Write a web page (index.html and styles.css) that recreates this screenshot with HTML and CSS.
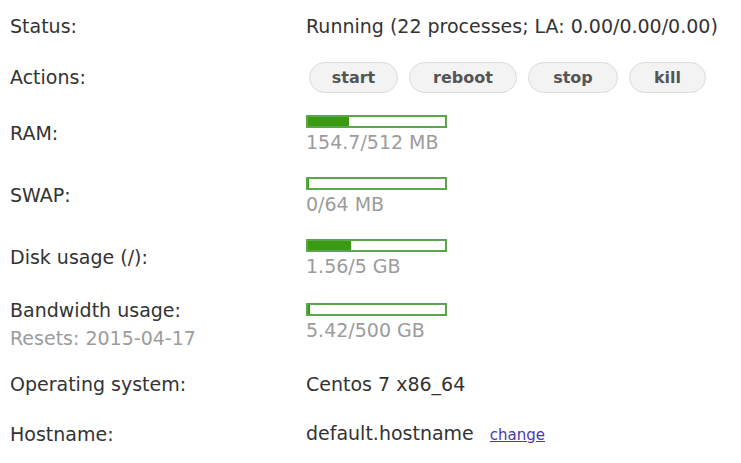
FILE: index.html
```html
<!DOCTYPE html>
<html>
<head>
<meta charset="utf-8">
<link rel="stylesheet" href="styles.css">
</head>
<body>
<div class="info">
  <div class="row r-status">
    <div class="label">Status:</div>
    <div class="value">Running (22 processes; LA: 0.00/0.00/0.00)</div>
  </div>
  <div class="row r-actions">
    <div class="label">Actions:</div>
    <div class="value actions">
      <button class="btn b-start">start</button>
      <button class="btn b-reboot">reboot</button>
      <button class="btn b-stop">stop</button>
      <button class="btn b-kill">kill</button>
    </div>
  </div>
  <div class="row r-meter">
    <div class="label">RAM:</div>
    <div class="value meter">
      <div class="bar"><div class="fill" style="width:30.2%"></div></div>
      <div class="sub">154.7/512 MB</div>
    </div>
  </div>
  <div class="row r-meter">
    <div class="label">SWAP:</div>
    <div class="value meter">
      <div class="bar"><div class="fill" style="width:1%"></div></div>
      <div class="sub">0/64 MB</div>
    </div>
  </div>
  <div class="row r-meter">
    <div class="label">Disk usage (/):</div>
    <div class="value meter">
      <div class="bar"><div class="fill" style="width:31.2%"></div></div>
      <div class="sub">1.56/5 GB</div>
    </div>
  </div>
  <div class="row r-bw">
    <div class="label">Bandwidth usage:<div class="sub">Resets: 2015-04-17</div></div>
    <div class="value meter">
      <div class="bar"><div class="fill" style="width:1.1%"></div></div>
      <div class="sub">5.42/500 GB</div>
    </div>
  </div>
  <div class="row r-os">
    <div class="label">Operating system:</div>
    <div class="value">Centos 7 x86_64</div>
  </div>
  <div class="row r-host">
    <div class="label">Hostname:</div>
    <div class="value">default.hostname<a class="change" href="#">change</a></div>
  </div>
</div>
</body>
</html>
```
FILE: styles.css
```css
html, body { margin: 0; padding: 0; background: #fff; }
body {
  font-family: "DejaVu Sans", Verdana, sans-serif;
  font-size: 19px;
  line-height: 23px;
  color: #333;
}
.info { padding: 0 0 0 10px; }
.row { display: flex; align-items: center; }
.label { width: 296px; flex: none; }
.value { flex: none; }
.r-status { height: 53px; }
.r-actions { height: 49px; }
.r-meter { height: 62px; }
.r-bw { height: 72px; }
.r-os { height: 48px; }
.r-host { height: 52px; }
.actions { display: flex; gap: 11px; margin-left: 3px; }
.btn {
  font-family: "DejaVu Sans", Verdana, sans-serif;
  font-weight: bold;
  font-size: 16px;
  color: #555;
  background: #f3f3f3;
  border: 1px solid #dcdcdc;
  border-radius: 16px;
  height: 31px;
  padding: 0;
}
.b-start { width: 89px; }
.b-reboot { width: 108px; }
.b-stop { width: 90px; }
.b-kill { width: 77px; }
.meter { padding-top: 2px; }
.r-bw .meter { padding-top: 0; margin-bottom: 4px; }
.bar {
  width: 137px;
  height: 9px;
  border: 2px solid #5aa64a;
  background: #fff;
}
.fill { height: 100%; background: #3a9a12; }
.meter .sub { margin-top: 3px; }
.sub { color: #9c9c9c; }
.label .sub { margin-top: 5px; }
.change { font-size: 15px; color: #4a3aa8; margin-left: 16px; }
```
